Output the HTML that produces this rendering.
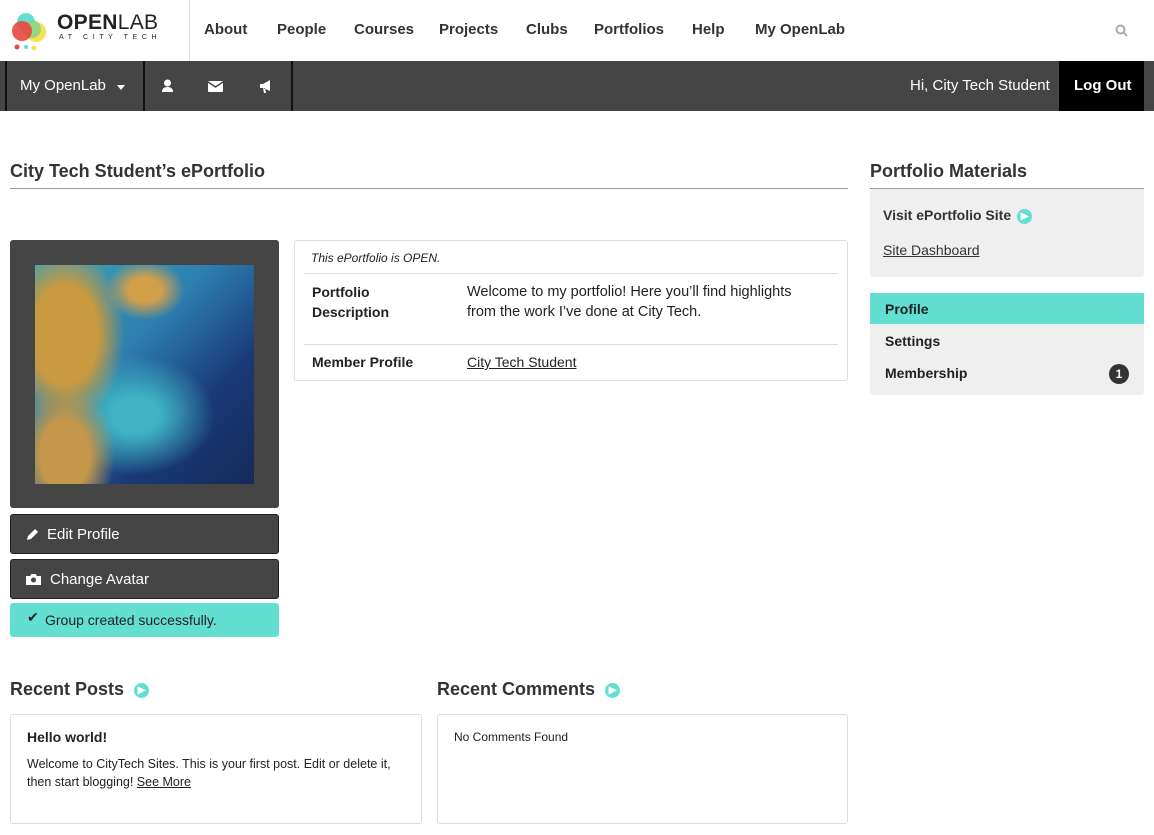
<!DOCTYPE html>
<html><head><meta charset="utf-8"><style>
*{box-sizing:border-box;margin:0;padding:0}
body{width:1154px;height:835px;overflow:hidden;background:#fff;font-family:"Liberation Sans",sans-serif;color:#333;position:relative}
.a{position:absolute}
.nav a{position:absolute;top:21px;font-weight:bold;font-size:15px;color:#333;text-decoration:none}
.bar{position:absolute;top:61px;left:0;width:1154px;height:50px;background:#454545;color:#fff;font-size:15px}
.sep{position:absolute;top:0;width:2px;height:50px;background:#111}
h2{font-size:18px;font-weight:bold;color:#333}
.btn{position:absolute;left:10px;width:269px;background:#454545;border-radius:3px;color:#fff;font-size:15px;padding-left:36px;border:1px solid #222}
.circ{display:inline-block;width:15px;height:15px;border-radius:50%;background:#63dfd2;color:#fff;font-size:10px;text-align:center;line-height:15px;vertical-align:middle;margin-left:6px}
u{text-decoration:underline}
</style></head><body>
<svg class="a" style="left:10px;top:12px" width="40" height="40" viewBox="0 0 40 40">
<circle cx="16" cy="10" r="9" fill="#63dfd2"/><circle cx="26" cy="20" r="10" fill="#f8e24e"/><circle cx="22" cy="17" r="9" fill="#7dd38b" opacity=".8"/><circle cx="12" cy="19" r="10" fill="#e8473f" opacity=".9"/><circle cx="7" cy="35" r="2.5" fill="#e8473f"/><circle cx="16" cy="35" r="2" fill="#63dfd2"/><circle cx="24" cy="36" r="2.5" fill="#f8e24e"/></svg>
<div class="a" style="left:57px;top:11px;font-size:21px;letter-spacing:.3px;color:#222"><b>OPEN</b>LAB</div>
<div class="a" style="left:59px;top:34px;font-size:7px;letter-spacing:4.6px;color:#222">AT CITY TECH</div>
<div class="a" style="left:189px;top:0;width:1px;height:61px;background:#ddd"></div>
<div class="nav">
<a style="left:204px">About</a><a style="left:277px">People</a><a style="left:354px">Courses</a><a style="left:439px">Projects</a><a style="left:526px">Clubs</a><a style="left:594px">Portfolios</a><a style="left:692px">Help</a><a style="left:755px">My OpenLab</a>
</div>
<svg class="a" style="left:1115px;top:24px" width="13" height="13" viewBox="0 0 13 13"><circle cx="5.5" cy="5.5" r="4" stroke="#aaa" stroke-width="2" fill="none"/><path d="M8.5 8.5L12 12" stroke="#aaa" stroke-width="2"/></svg>
<div class="bar">
<div class="sep" style="left:5px"></div><div class="sep" style="left:143px"></div><div class="sep" style="left:291px"></div>
<div class="a" style="left:20px;top:16px">My OpenLab</div>
<div class="a" style="left:117px;top:24px;border:4px solid transparent;border-top:5px solid #fff"></div>
<svg class="a" style="left:161px;top:18px" width="13" height="14" viewBox="0 0 13 14"><circle cx="6.5" cy="4" r="3.5" fill="#fff"/><path d="M1 13q0-5 5.5-5t5.5 5z" fill="#fff"/></svg>
<svg class="a" style="left:208px;top:20px" width="15" height="11" viewBox="0 0 15 11"><rect width="15" height="11" rx="1" fill="#fff"/><path d="M0 1l7.5 5L15 1" stroke="#454545" stroke-width="1.5" fill="none"/></svg>
<svg class="a" style="left:259px;top:19px" width="15" height="13" viewBox="0 0 15 13"><path d="M1 4h3l7-4v11L4 8H1z M4 8l1 5h2l-1-5z" fill="#fff"/></svg>
<div class="a" style="left:910px;top:16px">Hi, City Tech Student</div>
<div class="a" style="left:1059px;top:0;width:85px;height:50px;background:#000;font-weight:bold;padding:16px 0 0 15px">Log Out</div>
</div>
<h2 class="a" style="left:10px;top:161px">City Tech Student’s ePortfolio</h2>
<div class="a" style="left:10px;top:188px;width:838px;height:1px;background:#999"></div>
<h2 class="a" style="left:870px;top:161px">Portfolio Materials</h2>
<div class="a" style="left:870px;top:188px;width:274px;height:89px;background:#efefef;border-top:1px solid #999;border-radius:0 0 3px 3px"></div>
<div class="a" style="left:883px;top:207px;font-size:14px;font-weight:bold">Visit ePortfolio Site<span class="circ">&#9654;</span></div>
<div class="a" style="left:883px;top:242px;font-size:14px"><u>Site Dashboard</u></div>
<div class="a" style="left:870px;top:293px;width:274px;height:102px;background:#efefef;border-radius:3px"></div>
<div class="a" style="left:870px;top:293px;width:274px;height:31px;background:#63dfd2"></div>
<div class="a" style="left:885px;top:301px;font-size:14px;font-weight:bold;color:#222">Profile</div>
<div class="a" style="left:885px;top:333px;font-size:14px;font-weight:bold;color:#222">Settings</div>
<div class="a" style="left:885px;top:365px;font-size:14px;font-weight:bold;color:#222">Membership</div>
<div class="a" style="left:1109px;top:364px;width:20px;height:20px;border-radius:50%;background:#333;color:#fff;font-size:12px;text-align:center;line-height:20px;font-weight:bold">1</div>

<div class="a" style="left:10px;top:240px;width:269px;height:268px;background:#454545;border-radius:3px"></div>
<div class="a" style="left:35px;top:265px;width:219px;height:219px;background:
radial-gradient(ellipse 60px 90px at 30px 70px,#c99a3f 55%,transparent 100%),
radial-gradient(ellipse 50px 70px at 30px 190px,#c4974a 50%,transparent 100%),
radial-gradient(ellipse 40px 30px at 110px 25px,#d3a04a 40%,transparent 100%),
radial-gradient(ellipse 80px 60px at 100px 150px,#3fb4c4 30%,transparent 100%),
linear-gradient(135deg,#3ba3b5 0%,#2d7fb0 40%,#1a3a76 70%,#142a5a 100%)"></div>

<div class="a" style="left:294px;top:240px;width:554px;height:141px;border:1px solid #ddd;border-radius:3px"></div>
<div class="a" style="left:311px;top:251px;font-size:12px;font-style:italic;color:#222">This ePortfolio is OPEN.</div>
<div class="a" style="left:304px;top:273px;width:534px;height:1px;background:#ddd"></div>
<div class="a" style="left:312px;top:282px;font-size:14px;font-weight:bold;line-height:20px;color:#222">Portfolio<br>Description</div>
<div class="a" style="left:467px;top:282px;font-size:14.5px;line-height:20px;color:#222">Welcome to my portfolio! Here you’ll find highlights<br>from the work I’ve done at City Tech.</div>
<div class="a" style="left:304px;top:344px;width:534px;height:1px;background:#ddd"></div>
<div class="a" style="left:312px;top:354px;font-size:14px;font-weight:bold;color:#222">Member Profile</div>
<div class="a" style="left:467px;top:354px;font-size:14px;color:#222"><u>City Tech Student</u></div>

<div class="btn" style="top:514px;height:40px;line-height:39px">Edit Profile</div>
<svg class="a" style="left:27px;top:528px" width="12" height="12" viewBox="0 0 12 12"><path d="M0 12l1-4 7-7 3 3-7 7z" fill="#fff"/></svg>
<div class="btn" style="top:559px;height:40px;line-height:39px;padding-left:39px">Change Avatar</div>
<svg class="a" style="left:26px;top:573px" width="15" height="12" viewBox="0 0 15 12"><path d="M0 3h4l1.5-2h4L11 3h4v9H0z" fill="#fff"/><circle cx="7.5" cy="7" r="2.5" fill="#454545"/></svg>
<div class="a" style="left:10px;top:603px;width:269px;height:34px;background:#63dfd2;border-radius:3px;font-size:14px;color:#222;padding:9px 0 0 35px">Group created successfully.</div>
<div class="a" style="left:27px;top:609px;font-size:14px;color:#222">&#10004;</div>

<h2 class="a" style="left:10px;top:679px">Recent Posts<span class="circ" style="margin-left:10px">&#9654;</span></h2>
<h2 class="a" style="left:437px;top:679px">Recent Comments<span class="circ" style="margin-left:10px">&#9654;</span></h2>
<div class="a" style="left:10px;top:714px;width:412px;height:110px;border:1px solid #ddd;border-radius:3px"></div>
<div class="a" style="left:27px;top:729px;font-size:14px;font-weight:bold;color:#222">Hello world!</div>
<div class="a" style="left:27px;top:755px;font-size:12.5px;line-height:18px;color:#222">Welcome to CityTech Sites. This is your first post. Edit or delete it,<br>then start blogging! <u>See More</u></div>
<div class="a" style="left:437px;top:714px;width:411px;height:110px;border:1px solid #ddd;border-radius:3px"></div>
<div class="a" style="left:454px;top:730px;font-size:12px;color:#222">No Comments Found</div>
</body></html>
